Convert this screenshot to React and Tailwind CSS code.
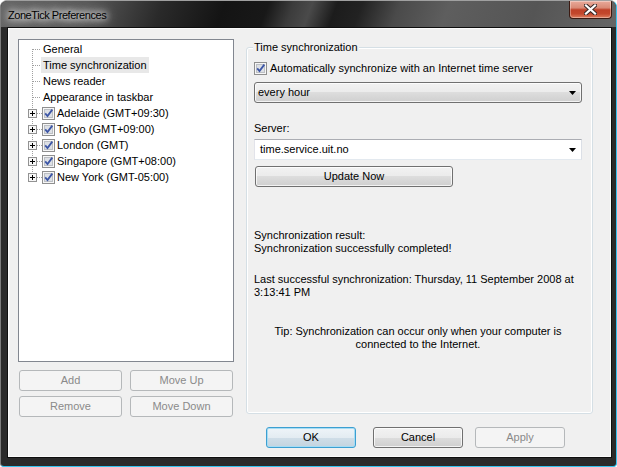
import React from "react";

const Chk = () => (
  <svg width="13" height="13" viewBox="0 0 13 13" className="shrink-0 block">
    <rect x="0.5" y="0.5" width="12" height="12" fill="#f6f6f6" stroke="#8f8f8f" shapeRendering="crispEdges" />
    <rect x="2.5" y="2.5" width="8" height="8" fill="#dde0e5" stroke="#bcbfc4" shapeRendering="crispEdges" />
    <path d="M3.2 6.3 L5.5 9 L10.3 2.6" fill="none" stroke="#3d56a6" strokeWidth="1.8" />
  </svg>
);

const Arrow = () => (
  <svg width="7" height="4" viewBox="0 0 7 4" className="block">
    <path d="M0 0H7L3.5 4Z" fill="#000" />
  </svg>
);

const Connector = ({ idx, total, plus }) => {
  const y1 = idx === 0 ? 8 : 0;
  const y2 = idx === total - 1 ? 9 : 16;
  const w = plus ? 23 : 22;
  return (
    <svg width={w} height="16" viewBox={`0 0 ${w} 16`} className="shrink-0 block" shapeRendering="crispEdges">
      <path d={`M13.5 ${y1}V${y2}`} stroke="#a0a0a0" strokeDasharray="1 1" />
      {plus ? (
        <>
          <path d="M18 8.5H23" stroke="#a0a0a0" strokeDasharray="1 1" />
          <rect x="9.5" y="4.5" width="8" height="8" fill="#f7f7f7" stroke="#929292" />
          <path d="M11 8.5H16M13.5 6V11" stroke="#000" />
        </>
      ) : (
        <path d="M14 8.5H22" stroke="#a0a0a0" strokeDasharray="1 1" />
      )}
    </svg>
  );
};

const simple = ["General", "Time synchronization", "News reader", "Appearance in taskbar"];
const zones = [
  "Adelaide (GMT+09:30)",
  "Tokyo (GMT+09:00)",
  "London (GMT)",
  "Singapore (GMT+08:00)",
  "New York (GMT-05:00)",
];

const btnNormal =
  "h-[21px] rounded-[3px] border border-[#707070] bg-[linear-gradient(#f2f2f2_0%,#ebebeb_50%,#dddddd_50%,#cfcfcf_100%)] shadow-[inset_0_0_0_1px_rgba(255,255,255,0.75)] flex items-center justify-center text-black";
const btnDisabled =
  "h-[21px] rounded-[3px] border border-[#b5b8ba] bg-[#f4f4f4] flex items-center justify-center text-[#8a8a8a]";

export default function App() {
  const total = simple.length + zones.length;
  return (
    <div className="w-[617px] h-[467px] bg-white font-['Liberation_Sans',Arial,sans-serif] text-[11px] leading-[13px] text-black">
      <div className="w-[617px] h-[467px] flex flex-col rounded-t-[7px] rounded-b-[4px] bg-[#2a2a2a] border border-t-[#a0a0a0] border-l-[#7c7c7c] border-r-[#35c3ef] border-b-[#35c3ef] overflow-hidden">
        {/* Title bar */}
        <div className="h-[26px] flex items-start bg-[linear-gradient(110deg,#666666_0%,#585858_14%,#2a2a2a_26%,#141414_36%,#181818_43%,#3c3c3c_47%,#4a4a4a_50%,#1c1c1c_54%,#222222_58%,#4a4a4a_64%,#5e5e5e_72%,#555555_86%,#666666_100%)]">
          <div className="pl-[7px] pt-[7px] leading-[14px] text-[11px] tracking-[-0.45px] text-black [text-shadow:0_0_6px_#ffffff,0_0_10px_#ffffff,0_0_14px_#ffffff]">
            ZoneTick Preferences
          </div>
          <div className="ml-auto mr-[4px] w-[43px] h-[18px] rounded-b-[4px] border border-t-0 border-[#3b1a12] bg-[linear-gradient(#e9aa9a_0%,#d98a76_40%,#bf4128_52%,#c3472c_75%,#de7e5e_100%)] shadow-[inset_0_0_0_1px_rgba(255,255,255,0.35)] flex items-center justify-center">
            <svg width="13" height="11" viewBox="0 0 13 11" className="block">
              <path d="M2 1.5L11 9.5M11 1.5L2 9.5" stroke="#3a2a28" strokeWidth="4.2" strokeLinecap="square" />
              <path d="M2 1.5L11 9.5M11 1.5L2 9.5" stroke="#ffffff" strokeWidth="2.2" strokeLinecap="square" />
            </svg>
          </div>
        </div>

        {/* Client area */}
        <div className="ml-[6px] w-[605px] h-[431px] border border-[#0e0e0e]">
          <div className="h-full border border-[#fbfbfb] bg-[#f0f0f0] flex flex-col pt-[10px] pl-[9px]">
            <div className="flex items-start">
              {/* Left column */}
              <div className="w-[216px] flex flex-col">
                <div className="h-[323px] border border-[#828790] bg-white pt-[1px] overflow-hidden">
                  {simple.map((t, i) => (
                    <div key={t} className="flex items-center h-[16px]">
                      <Connector idx={i} total={total} plus={false} />
                      <span
                        className={
                          "px-[2px] h-[16px] leading-[16px] whitespace-nowrap" +
                          (i === 1 ? " bg-[#e8e8e8]" : "")
                        }
                      >
                        {t}
                      </span>
                    </div>
                  ))}
                  {zones.map((t, j) => (
                    <div key={t} className="flex items-center h-[16px]">
                      <Connector idx={simple.length + j} total={total} plus={true} />
                      <Chk />
                      <span className="px-[2px] h-[16px] leading-[16px] whitespace-nowrap">{t}</span>
                    </div>
                  ))}
                </div>
                <div className="flex mt-[8px] ml-[1px] gap-[8px]">
                  <div className={btnDisabled + " w-[103px]"}>Add</div>
                  <div className={btnDisabled + " w-[103px]"}>Move Up</div>
                </div>
                <div className="flex mt-[5px] ml-[1px] gap-[8px]">
                  <div className={btnDisabled + " w-[103px]"}>Remove</div>
                  <div className={btnDisabled + " w-[103px]"}>Move Down</div>
                </div>
              </div>

              {/* Group box */}
              <div className="ml-[12px] mt-[8px] w-[347px] h-[367px] relative rounded-[3px] border border-[#d5dfe5] shadow-[inset_0_0_0_1px_#ffffff] pl-[7px] pt-[14px]">
                <div className="absolute left-[6px] -top-[7px] px-[1px] bg-[#f0f0f0] leading-[13px]">
                  Time synchronization
                </div>
                <div className="flex items-center h-[13px]">
                  <Chk />
                  <span className="ml-[3px] whitespace-nowrap">
                    Automatically synchronize with an Internet time server
                  </span>
                </div>
                <div className={btnNormal.replace("justify-center", "justify-between") + " mt-[7px] w-[328px] pl-[3px] pr-[5px]"}>
                  <span>every hour</span>
                  <Arrow />
                </div>
                <div className="mt-[19px]">Server:</div>
                <div className="mt-[4px] w-[328px] h-[21px] bg-white border border-t-[#abadb3] border-l-[#e2e3ea] border-r-[#dbdfe6] border-b-[#e3e9ef] flex items-center justify-between pl-[5px] pr-[5px]">
                  <span>time.service.uit.no</span>
                  <Arrow />
                </div>
                <div className={btnNormal + " mt-[6px] ml-[1px] w-[198px]"}>Update Now</div>

                <div className="mt-[42px]">
                  Synchronization result:
                  <br />
                  Synchronization successfully completed!
                </div>
                <div className="mt-[18px] whitespace-nowrap">
                  Last successful synchronization: Thursday, 11 September 2008 at
                  <br />
                  3:13:41 PM
                </div>
                <div className="mt-[26px] w-[328px] text-center">
                  Tip: Synchronization can occur only when your computer is
                  <br />
                  connected to the Internet.
                </div>
              </div>
            </div>

            {/* Bottom buttons */}
            <div className="flex mt-[10px] ml-[248px]">
              <div className="w-[90px] h-[21px] rounded-[3px] border border-[#3c9fd1] shadow-[inset_0_0_0_1px_#a6dcf4] bg-[linear-gradient(#eef4f8_0%,#e3ecf2_50%,#d0dee8_50%,#c3d4df_100%)] flex items-center justify-center">
                OK
              </div>
              <div className={btnNormal + " w-[90px] ml-[17px]"}>Cancel</div>
              <div className={btnDisabled + " w-[90px] ml-[12px]"}>Apply</div>
            </div>
          </div>
        </div>
      </div>
    </div>
  );
}
